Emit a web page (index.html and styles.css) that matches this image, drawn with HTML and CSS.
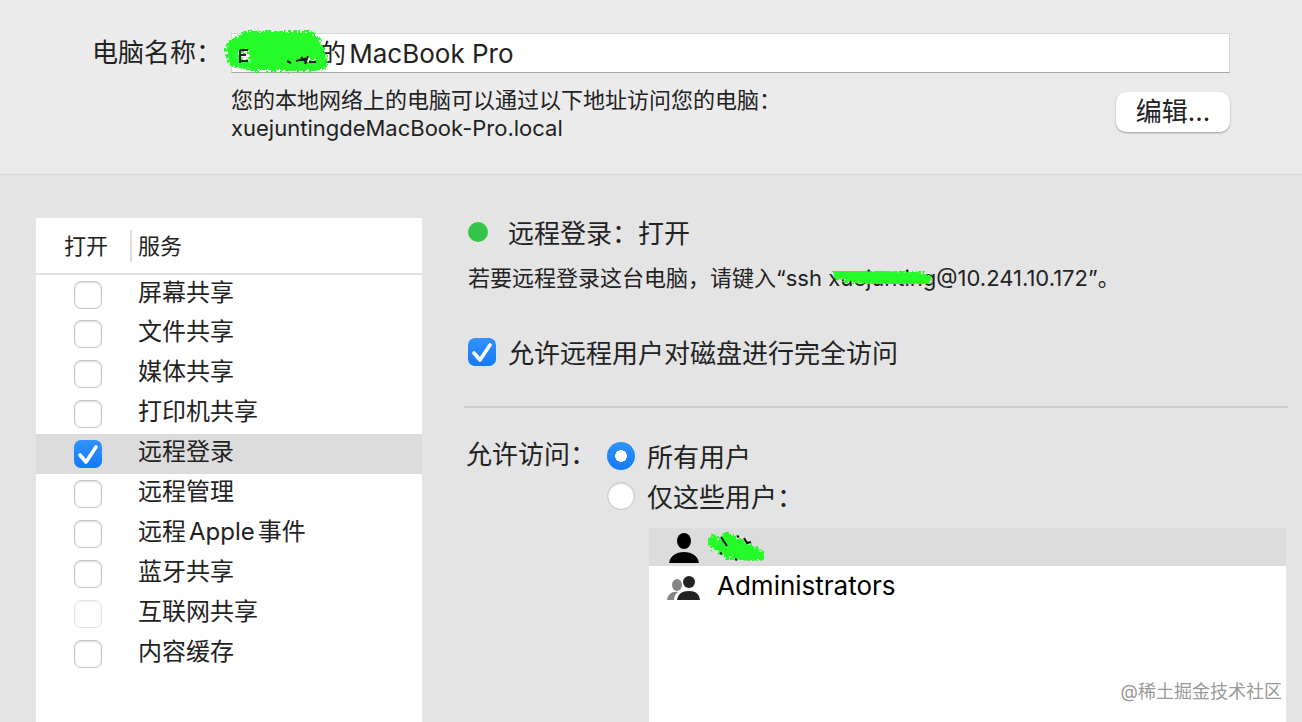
FILE: index.html
```
<!DOCTYPE html>
<html lang="zh-CN">
<head>
  <meta charset="utf-8">
  <meta name="viewport" content="width=device-width, initial-scale=1">
  <title>共享</title>
  <link rel="stylesheet" href="styles.css">
</head>
<body>
  <svg class="defs" width="0" height="0" aria-hidden="true">
    <filter id="rough" x="-10%" y="-30%" width="120%" height="160%">
      <feTurbulence type="fractalNoise" baseFrequency="0.35" numOctaves="2" seed="4" result="noise"/>
      <feDisplacementMap in="SourceGraphic" in2="noise" scale="10" xChannelSelector="R" yChannelSelector="G"/>
    </filter>
  </svg>

  <header class="computer">
    <label class="computer-label" for="computerName">电脑名称：</label>
    <div class="name-field">
      <input id="computerName" class="name-input" type="text" value="的MacBook Pro">
      <svg class="scribble scribble-name" viewBox="0 0 108 46" aria-hidden="true">
        <g filter="url(#rough)" fill="none" stroke="#26fb2c" stroke-linecap="round" stroke-linejoin="round">
          <path d="M10 20L24 10L86 10L94 22L32 18" stroke-width="16"/>
          <path d="M34 24L62 25L88 20" stroke-width="18"/>
          <path d="M8 20L10 32L30 37L96 37" stroke-width="10"/>
          <path d="M97 26L98 36" stroke-width="12"/>
        </g>
        <path d="M17 21v13M17 21h8M17 26h6M17 32h8M64 32l4 2M73 32l12-3M78 28l6 6M85 27l-3 8M86 33h7" fill="none" stroke="#222" stroke-width="2"/>
      </svg>
    </div>
    <div class="computer-info">
      <p class="address">您的本地网络上的电脑可以通过以下地址访问您的电脑：<br>xuejuntingdeMacBook-Pro.local</p>
      <button class="edit-button" type="button">编辑...</button>
    </div>
  </header>

  <main class="content">
    <section class="services">
      <table class="service-table">
        <thead>
          <tr><th class="col-on">打开</th><th class="col-name">服务</th></tr>
        </thead>
        <tbody>
          <tr><td class="on"><input type="checkbox" id="screen"></td><td><label for="screen">屏幕共享</label></td></tr>
          <tr><td class="on"><input type="checkbox" id="file"></td><td><label for="file">文件共享</label></td></tr>
          <tr><td class="on"><input type="checkbox" id="media"></td><td><label for="media">媒体共享</label></td></tr>
          <tr><td class="on"><input type="checkbox" id="printer"></td><td><label for="printer">打印机共享</label></td></tr>
          <tr class="selected"><td class="on"><input type="checkbox" id="login" checked></td><td><label for="login">远程登录</label></td></tr>
          <tr><td class="on"><input type="checkbox" id="manage"></td><td><label for="manage">远程管理</label></td></tr>
          <tr><td class="on"><input type="checkbox" id="events"></td><td><label for="events">远程Apple事件</label></td></tr>
          <tr><td class="on"><input type="checkbox" id="bluetooth"></td><td><label for="bluetooth">蓝牙共享</label></td></tr>
          <tr><td class="on"><input type="checkbox" id="internet" disabled></td><td><label for="internet">互联网共享</label></td></tr>
          <tr><td class="on"><input type="checkbox" id="cache"></td><td><label for="cache">内容缓存</label></td></tr>
        </tbody>
      </table>
    </section>

    <section class="detail">
      <div class="status"><span class="dot"></span><h1>远程登录：打开</h1></div>
      <p class="hint">若要远程登录这台电脑，请键入“ssh <span class="user">xuejunting<svg class="scribble scribble-user" viewBox="0 0 100 22" aria-hidden="true"><path d="M6 7L90 10L74 14L16 10L50 13L94 13" filter="url(#rough)" fill="none" stroke="#26fb2c" stroke-width="11" stroke-linecap="round" stroke-linejoin="round"/></svg></span>@10.241.10.172”。</p>
      <div class="option full-disk">
        <input type="checkbox" id="fullDisk" checked>
        <label for="fullDisk">允许远程用户对磁盘进行完全访问</label>
      </div>
      <hr>
      <div class="access">
        <span class="access-label">允许访问：</span>
        <div class="access-options" role="radiogroup" aria-label="允许访问">
          <div class="option">
            <input type="radio" name="access" id="allUsers" checked>
            <label for="allUsers">所有用户</label>
          </div>
          <div class="option">
            <input type="radio" name="access" id="someUsers">
            <label for="someUsers">仅这些用户：</label>
          </div>
          <ul class="users">
            <li class="selected">
              <svg class="user-icon" viewBox="0 0 34 34" aria-hidden="true">
                <ellipse cx="17" cy="11" rx="7" ry="8"/>
                <path d="M2 33C3 26 9 22 17 22s14 4 15 11z"/>
              </svg>
              <svg class="scribble-item" viewBox="0 0 64 34" aria-hidden="true">
                <g filter="url(#rough)" fill="none" stroke="#26fb2c" stroke-linecap="round" stroke-linejoin="round">
                  <path d="M8 11L24 22L52 25" stroke-width="13"/>
                  <path d="M22 8L38 18L54 25" stroke-width="12"/>
                </g>
                <path d="M16 7l6 9M32 6l2 1M39 8l3 5 4-1M15 23l2 1M30 29l2 1" fill="none" stroke="#111" stroke-width="2"/>
              </svg>
            </li>
            <li>
              <svg class="user-icon" viewBox="0 0 34 34" aria-hidden="true">
                <g fill="#858585">
                  <ellipse cx="10" cy="17" rx="5" ry="6"/>
                  <path d="M0 32c1-6 5-9 11-8-3 2-4 5-4 8z"/>
                </g>
                <g fill="#222">
                  <ellipse cx="22" cy="14" rx="6" ry="6"/>
                  <path d="M10 32c1-6 5-9 12-9s10 3 11 9z"/>
                </g>
              </svg>
              Administrators
            </li>
          </ul>
        </div>
      </div>
    </section>
  </main>
  <div class="watermark">@稀土掘金技术社区</div>
</body>
</html>
```
FILE: styles.css
```
* {
  box-sizing: border-box;
}
body {
  margin: 0;
  height: 100vh;
  display: flex;
  flex-direction: column;
  overflow: hidden;
  position: relative;
  background-color: #e4e4e4;
  color: #222;
  font-family: Inter, "Noto Sans CJK SC", sans-serif;
  font-size: 26px;
  text-autospace: normal;
}
.defs {
  position: absolute;
}

/* computer name */
.computer {
  display: grid;
  grid-template-columns: 139px 1fr;
  padding: 33px 72px 32px 92px;
  background-color: #ebebeb;
  border-bottom: 1px solid #d8d8d8;
}
.computer-label {
  line-height: 40px;
  white-space: nowrap;
}
.name-field {
  position: relative;
}
.name-input {
  display: block;
  width: 100%;
  height: 40px;
  padding: 0 0 4px 88px;
  border: 1px solid #d6d6d6;
  border-bottom-color: #a8a8a8;
  background-color: #fff;
  color: #222;
  font: inherit;
}
.scribble {
  position: absolute;
  overflow: visible;
}
.scribble-name {
  left: -8px;
  top: -4px;
  width: 108px;
  height: 46px;
}
.computer-info {
  grid-column: 2;
  display: flex;
  justify-content: space-between;
  align-items: flex-start;
  padding-top: 13px;
}
.address {
  margin: 0;
  font-size: 22px;
  line-height: 28px;
}
.edit-button {
  width: 114px;
  height: 40px;
  margin-top: 6px;
  padding: 0;
  border: 0;
  border-radius: 10px;
  background-color: #fff;
  box-shadow: 0 1px 2px rgba(0,0,0,0.35);
  color: #222;
  font: inherit;
  line-height: 36px;
  text-autospace: no-autospace;
}

/* checkboxes and radios */
input[type="checkbox"],
input[type="radio"] {
  appearance: none;
  flex: none;
  display: block;
  width: 28px;
  height: 28px;
  margin: 0;
  border: 1px solid #c4c4c4;
  border-radius: 7px;
  background-color: #fff;
  box-shadow: inset 0 1px 2px rgba(0,0,0,0.15);
}
input[type="radio"] {
  border-radius: 50%;
}
input[type="checkbox"]:checked,
input[type="radio"]:checked {
  border: 0;
  box-shadow: none;
  background: linear-gradient(#3093fd, #1579fb);
}
input[type="checkbox"]:checked {
  background: url("data:image/svg+xml,%3Csvg xmlns='http://www.w3.org/2000/svg' viewBox='0 0 28 28'%3E%3Cpath d='M6 15l6 7L22 7' fill='none' stroke='white' stroke-width='3.6' stroke-linecap='round' stroke-linejoin='round'/%3E%3C/svg%3E"), linear-gradient(#3093fd, #1579fb);
}
input[type="radio"]:checked {
  background: radial-gradient(circle, #fff 0 6px, transparent 6px), linear-gradient(#3093fd, #1579fb);
}
input:disabled {
  opacity: 0.45;
}

.content {
  flex: 1;
  min-height: 0;
  display: flex;
  gap: 42px;
  padding: 43px 14px 0 36px;
}

/* service list */
.services {
  flex: 0 0 386px;
  background-color: #fff;
}
.service-table {
  width: 100%;
  border-collapse: collapse;
  table-layout: fixed;
  font-size: 24px;
}
.service-table th {
  height: 56px;
  padding: 0 0 4px;
  border-bottom: 2px solid #e2e2e2;
  font-size: 22px;
  font-weight: normal;
  text-align: left;
}
.service-table .col-on {
  width: 96px;
  padding-left: 28px;
  background: linear-gradient(#dedede, #dedede) right center / 2px 32px no-repeat;
}
.service-table .col-name {
  padding-left: 6px;
}
.service-table td {
  height: 40px;
  padding: 0 0 0 6px;
  line-height: 36px;
  vertical-align: top;
}
.service-table .on {
  padding-left: 38px;
  vertical-align: middle;
}
.selected {
  background-color: #dcdcdc;
}

/* remote login */
.detail {
  flex: 1;
  min-width: 0;
  display: flex;
  flex-direction: column;
}
.status {
  display: flex;
  align-items: center;
  gap: 20px;
  height: 28px;
  padding-left: 4px;
}
.dot {
  width: 20px;
  height: 20px;
  border-radius: 50%;
  background-color: #35c649;
}
h1 {
  margin: 0;
  padding-bottom: 2px;
  font-size: 26px;
  font-weight: normal;
}
.hint {
  margin: 18px 0 0;
  padding-left: 4px;
  font-size: 22px;
  line-height: 28px;
  white-space: nowrap;
}
.user {
  position: relative;
}
.scribble-user {
  left: 4px;
  top: 2px;
  width: 100px;
  height: 22px;
}
.option {
  display: flex;
  align-items: center;
  gap: 12px;
  height: 40px;
}
.option label {
  padding-bottom: 2px;
}
.full-disk {
  margin-top: 40px;
  padding-left: 4px;
}
hr {
  width: 100%;
  height: 2px;
  margin: 34px 0 0;
  border: 0;
  background-color: #cfcfcf;
}
.access {
  flex: 1;
  display: flex;
  padding: 28px 2px 0;
}
.access-label {
  flex: 0 0 141px;
  line-height: 38px;
}
.access-options {
  flex: 1;
  display: flex;
  flex-direction: column;
}
.users {
  flex: 1;
  margin: 12px 0 0 42px;
  padding: 0;
  list-style: none;
  background-color: #fff;
  color: #000;
}
.users li {
  display: flex;
  align-items: center;
  height: 38px;
  padding-left: 18px;
}
.user-icon {
  width: 34px;
  height: 34px;
  margin-right: 16px;
}
.scribble-item {
  width: 64px;
  height: 34px;
  margin-left: -12px;
  overflow: visible;
}

.watermark {
  position: absolute;
  right: 20px;
  bottom: 16px;
  color: #999;
  font-size: 18px;
  line-height: 28px;
  text-autospace: no-autospace;
}
```
